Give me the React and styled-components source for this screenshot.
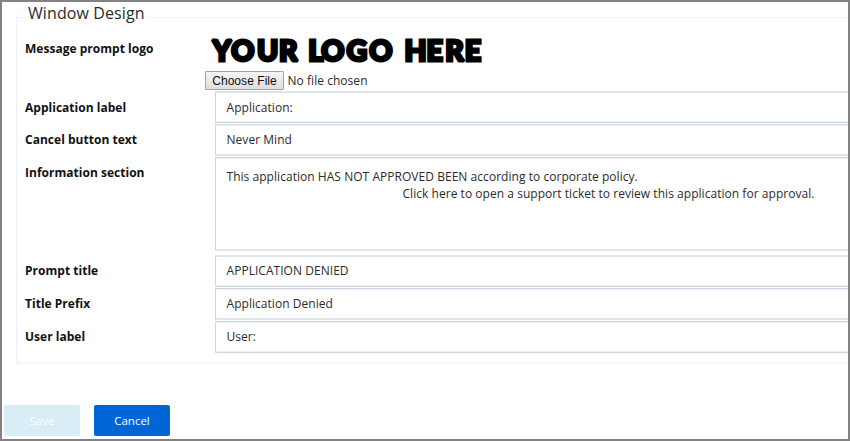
import React from "react";
import styled, { createGlobalStyle } from "styled-components";

const GlobalStyle = createGlobalStyle`
  * { box-sizing: border-box; }
  body { margin: 0; background: #fff; overflow: hidden; }
`;

const Window = styled.main`
  width: 850px;
  height: 441px;
  border: 2px solid #828282;
  overflow: hidden;
  display: flex;
  flex-direction: column;
  font-family: "Open Sans", sans-serif;
  font-size: 12px;
  color: #2c2c2c;
`;

const Legend = styled.header`
  height: 16px;
  margin-left: 14px;
  display: flex;
  align-items: flex-end;
  flex: none;

  &::before {
    content: "";
    width: 9px;
    height: 1px;
    background: #edf0f5;
  }
  &::after {
    content: "";
    flex: 1;
    height: 1px;
    background: #f0f1f3;
  }
`;

const Title = styled.h1`
  margin: 0 4px 0 3px;
  width: 117px;
  height: 16px;
  line-height: 22px;
  font-size: 16px;
  font-weight: 400;
  letter-spacing: 0.1px;
  white-space: nowrap;
`;

const Group = styled.section`
  height: 346px;
  flex: none;
  margin-left: 14px;
  padding-left: 8px;
  border-left: 1px solid #edf0f8;
  border-bottom: 2px solid #f6f7f8;
`;

const Row = styled.div`
  display: grid;
  grid-template-columns: 190px 1fr;
  height: ${(p) => p.$height}px;
`;

const Label = styled.label`
  padding-top: ${(p) => p.$top ?? 7}px;
  line-height: 17px;
  font-weight: 700;
  color: #111;
  letter-spacing: 0.02px;
  white-space: nowrap;
`;

const LogoCell = styled.div`
  padding-top: 15px;
  margin-left: -10px;
`;

const Logo = styled.svg`
  display: block;
  width: 290px;
  height: 38px;
  overflow: visible;
`;

const LogoWord = styled.text`
  font: 900 28.5px Lato, sans-serif;
  fill: #000;
  stroke: #000;
  stroke-width: 3px;
  stroke-linejoin: miter;
  stroke-miterlimit: 2;
`;

const FilePicker = styled.div`
  display: flex;
  align-items: center;
  height: 19px;
`;

const FileButton = styled.button`
  width: 79px;
  height: 19px;
  padding: 0;
  border: 1px solid #a5a5a5;
  border-radius: 1px;
  background: linear-gradient(#f5f5f5, #dedede);
  font: 12px "Liberation Sans", sans-serif;
  letter-spacing: 0.05px;
  color: #111;
`;

const FileName = styled.span`
  margin-left: 3.5px;
  letter-spacing: 0.04px;
`;

const edges = {
  strong: ["#cbd8e3", "#ecf1f5"],
  soft: ["#e1e8ed", "#dde5eb"],
};

const Field = styled.div`
  height: ${(p) => p.$height ?? 32}px;
  padding: ${(p) => p.$pad ?? 6}px 0 0 10.5px;
  border: solid #cbd8e3;
  border-width: 1px 0 1px 1px;
  border-top-color: ${(p) => edges[p.$top][0]};
  border-bottom-color: ${(p) => edges[p.$bottom][0]};
  box-shadow: inset 0 1px ${(p) => edges[p.$top][1]}, inset 0 -1px ${(p) => edges[p.$bottom][1]};
  line-height: 17px;
  white-space: pre;
`;

const Line = styled.div`
  padding-left: ${(p) => p.$indent ?? 0}px;
  letter-spacing: 0.04px;
`;

const Actions = styled.footer`
  display: flex;
  gap: 14px;
  padding: 41px 0 0 2px;
`;

const Action = styled.button`
  width: 76px;
  height: 31px;
  padding: 0;
  border: 0;
  border-radius: 2px;
  background: ${(p) => (p.disabled ? "#d9edf7" : "#0066d6")};
  color: #fff;
  font: 11.5px "Open Sans", sans-serif;
`;

const logoWords = [
  { text: "YOUR", x: "7.5 26.2 51.9 73.9" },
  { text: "LOGO", x: "103.2 116.3 141.5 164.2" },
  { text: "HERE", x: "199.5 221.6 240.3 259.8" },
];

const fields = [
  { label: "Application label", value: "Application:", row: 33, pad: 7, labelTop: 8, top: "soft", bottom: "strong" },
  { label: "Cancel button text", value: "Never Mind", row: 33, top: "strong", bottom: "soft" },
  {
    label: "Information section",
    lines: [
      { text: "This application HAS NOT APPROVED BEEN according to corporate policy." },
      { text: "Click here to open a support ticket to review this application for approval.", indent: 176 },
    ],
    row: 98, height: 94, pad: 10, top: "strong", bottom: "soft",
  },
  { label: "Prompt title", value: "APPLICATION DENIED", row: 33, top: "soft", bottom: "strong" },
  { label: "Title Prefix", value: "Application Denied", row: 33, top: "strong", bottom: "soft" },
  { label: "User label", value: "User:", row: 32, top: "strong", bottom: "strong" },
];

export default function App() {
  return (
    <>
      <GlobalStyle />
      <Window>
        <Legend>
          <Title>Window Design</Title>
        </Legend>
        <Group>
          <Row $height={73}>
            <Label $top={22}>Message prompt logo</Label>
            <LogoCell>
              <Logo viewBox="0 0 290 38" role="img" aria-label="Your logo here">
                {logoWords.map((w) => (
                  <LogoWord key={w.text} x={w.x} y="27.5">{w.text}</LogoWord>
                ))}
              </Logo>
              <FilePicker>
                <FileButton>Choose File</FileButton>
                <FileName>No file chosen</FileName>
              </FilePicker>
            </LogoCell>
          </Row>
          {fields.map((f) => (
            <Row key={f.label} $height={f.row}>
              <Label $top={f.labelTop}>{f.label}</Label>
              <Field $height={f.height} $pad={f.pad} $top={f.top} $bottom={f.bottom}>
                {(f.lines ?? [{ text: f.value }]).map((l) => (
                  <Line key={l.text} $indent={l.indent}>{l.text}</Line>
                ))}
              </Field>
            </Row>
          ))}
        </Group>
        <Actions>
          <Action disabled>Save</Action>
          <Action>Cancel</Action>
        </Actions>
      </Window>
    </>
  );
}
